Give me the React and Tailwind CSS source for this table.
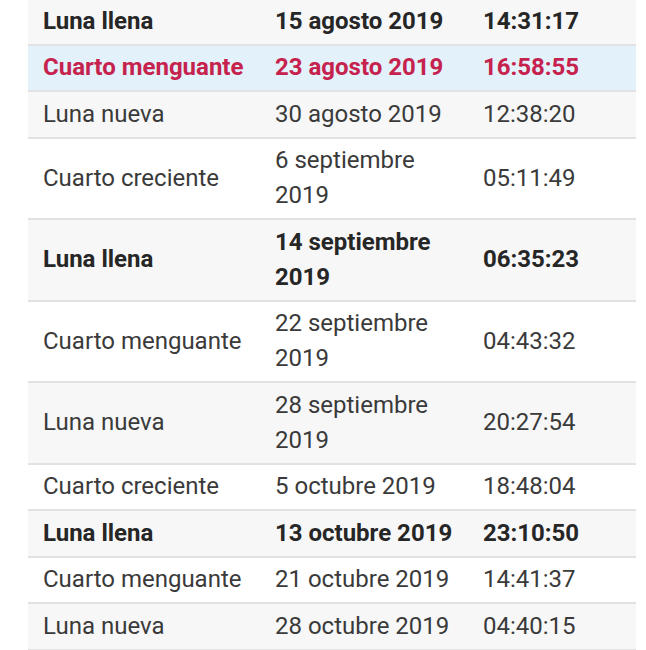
import React from "react";

const rows = [
  { p: "Luna llena", d: "15 agosto 2019", t: "14:31:17", kind: "bold", bg: "gray" },
  { p: "Cuarto menguante", d: "23 agosto 2019", t: "16:58:55", kind: "red", bg: "blue" },
  { p: "Luna nueva", d: "30 agosto 2019", t: "12:38:20", kind: "normal", bg: "gray" },
  { p: "Cuarto creciente", d: "6 septiembre 2019", t: "05:11:49", kind: "normal", bg: "white" },
  { p: "Luna llena", d: "14 septiembre 2019", t: "06:35:23", kind: "bold", bg: "gray" },
  { p: "Cuarto menguante", d: "22 septiembre 2019", t: "04:43:32", kind: "normal", bg: "white" },
  { p: "Luna nueva", d: "28 septiembre 2019", t: "20:27:54", kind: "normal", bg: "gray" },
  { p: "Cuarto creciente", d: "5 octubre 2019", t: "18:48:04", kind: "normal", bg: "white" },
  { p: "Luna llena", d: "13 octubre 2019", t: "23:10:50", kind: "bold", bg: "gray" },
  { p: "Cuarto menguante", d: "21 octubre 2019", t: "14:41:37", kind: "normal", bg: "white" },
  { p: "Luna nueva", d: "28 octubre 2019", t: "04:40:15", kind: "normal", bg: "gray" },
];

export default function App() {
  return (
    <div className="w-[646px] h-[650px] overflow-hidden bg-white font-['Roboto',sans-serif]">
      <div className="ml-[28px] w-[608px] -mt-[1px]">
        {rows.map((r, i) => {
          const bg =
            r.bg === "blue" ? "bg-[#e3f1fa]" : r.bg === "gray" ? "bg-[#f7f7f7]" : "bg-white";
          const txt =
            r.kind === "red"
              ? "text-[#c6224e] font-bold"
              : r.kind === "bold"
              ? "text-[#262626] font-bold"
              : "text-[#3a3a3a] font-normal";
          return (
            <div
              key={i}
              className={`grid grid-cols-[247px_208px_1fr] items-center border-b-2 border-[#e2e2e2] py-[4.75px] text-[24px] leading-[35px] ${bg} ${txt}`}
            >
              <div className="pl-[15px]">{r.p}</div>
              <div className="pr-[20px]">{r.d}</div>
              <div>{r.t}</div>
            </div>
          );
        })}
      </div>
    </div>
  );
}
